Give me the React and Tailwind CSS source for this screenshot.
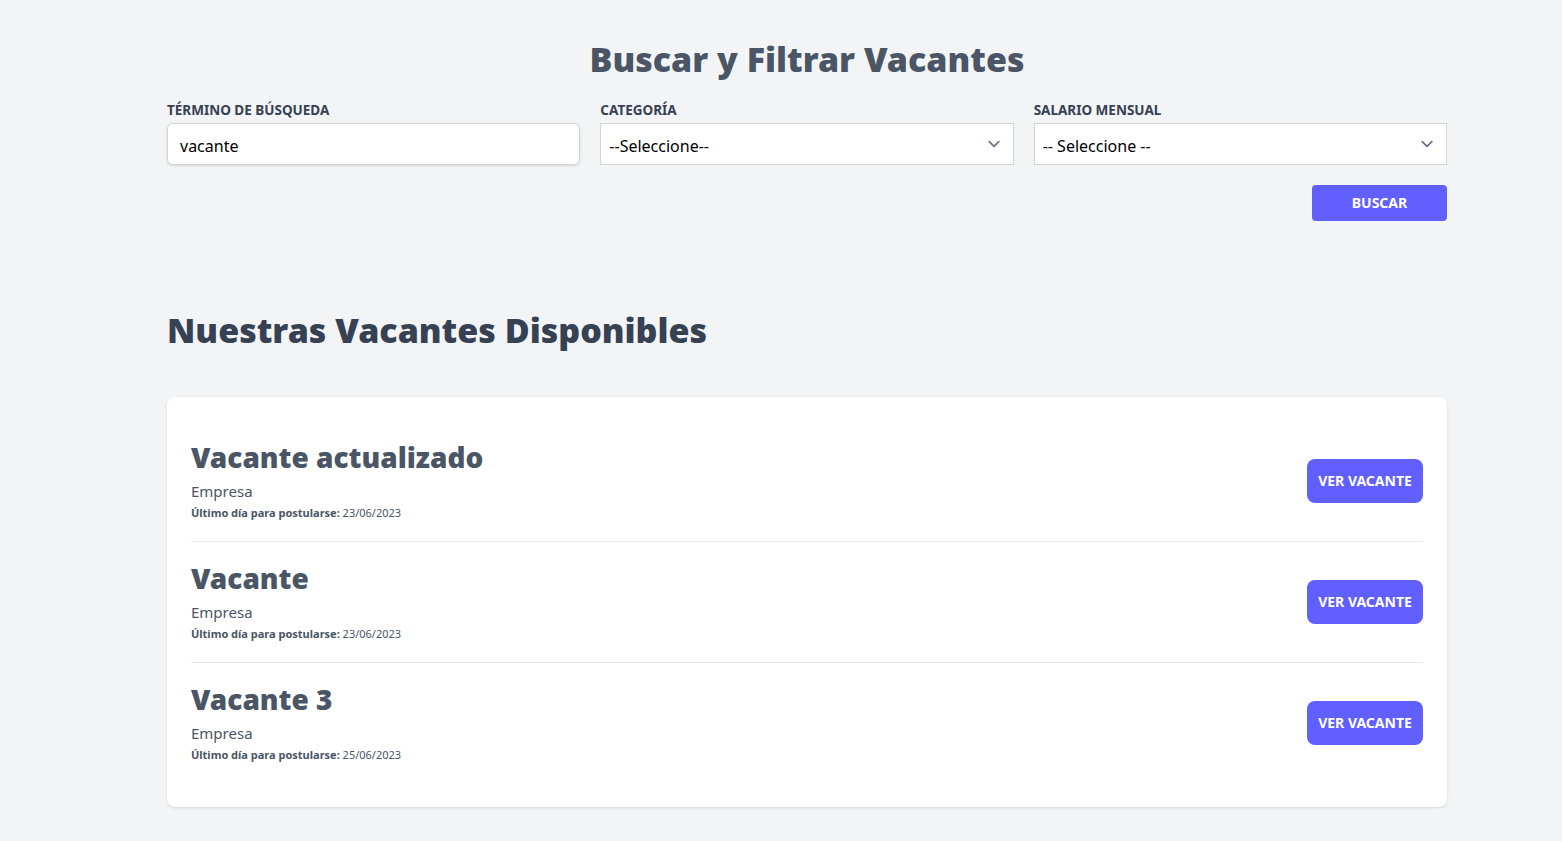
// Vacantes listing page: search filters + available vacancies

import React, { useState } from 'react';

const vacantes = [
  { id: 1, titulo: 'Vacante actualizado', empresa: 'Empresa', ultimoDia: '23/06/2023' },
  { id: 2, titulo: 'Vacante', empresa: 'Empresa', ultimoDia: '23/06/2023' },
  { id: 3, titulo: 'Vacante 3', empresa: 'Empresa', ultimoDia: '25/06/2023' },
];

function Chevron() {
  return (
    <svg className="w-6 h-6 text-gray-500" viewBox="0 0 20 20" fill="none" stroke="currentColor" strokeWidth="1.5">
      <path d="M6 8l4 4 4-4" strokeLinecap="round" strokeLinejoin="round" />
    </svg>
  );
}

export default function App() {
  const [termino, setTermino] = useState('vacante');
  const [categoria, setCategoria] = useState('');
  const [salario, setSalario] = useState('');

  return (
    <div className="min-h-screen bg-gray-100 font-['Noto_Sans',sans-serif]">
      <div className="w-[1280px] ml-[167px] pt-[39px] pb-8">
        {/* Buscador */}
        <h2 className="text-[34px] font-black text-gray-600 text-center leading-10">
          Buscar y Filtrar Vacantes
        </h2>

        <form className="mt-[21px]" onSubmit={(e) => e.preventDefault()}>
          <div className="grid grid-cols-3 gap-5">
            <div>
              <label htmlFor="termino" className="block text-[13.5px] font-bold uppercase text-gray-700 leading-5">
                Término de Búsqueda
              </label>
              <input
                id="termino"
                type="text"
                value={termino}
                onChange={(e) => setTermino(e.target.value)}
                className="mt-[3px] block w-full h-[42px] px-3 pt-1 bg-white border border-gray-300 rounded-md shadow-sm text-base text-black outline-none"
              />
            </div>

            <div>
              <label htmlFor="categoria" className="block text-[13.5px] font-bold uppercase text-gray-700 leading-5">
                Categoría
              </label>
              <div className="relative mt-[3px]">
                <select
                  id="categoria"
                  value={categoria}
                  onChange={(e) => setCategoria(e.target.value)}
                  className="appearance-none block w-full h-[42px] pl-2 pr-10 pt-1 bg-white border border-gray-300 text-base text-black outline-none"
                >
                  <option value="">--Seleccione--</option>
                  <option value="1">Desarrollo Web</option>
                  <option value="2">Diseño</option>
                </select>
                <span className="pointer-events-none absolute right-2 top-1/2 -translate-y-1/2">
                  <Chevron />
                </span>
              </div>
            </div>

            <div>
              <label htmlFor="salario" className="block text-[13.5px] font-bold uppercase text-gray-700 leading-5">
                Salario Mensual
              </label>
              <div className="relative mt-[3px]">
                <select
                  id="salario"
                  value={salario}
                  onChange={(e) => setSalario(e.target.value)}
                  className="appearance-none block w-full h-[42px] pl-2 pr-10 pt-1 bg-white border border-gray-300 text-base text-black outline-none"
                >
                  <option value="">-- Seleccione --</option>
                  <option value="1">$0 - $499</option>
                  <option value="2">$500 - $999</option>
                </select>
                <span className="pointer-events-none absolute right-2 top-1/2 -translate-y-1/2">
                  <Chevron />
                </span>
              </div>
            </div>
          </div>

          <div className="flex justify-end mt-5">
            <button
              type="submit"
              className="w-[135px] h-9 rounded bg-indigo-500 text-white text-sm font-bold uppercase"
            >
              Buscar
            </button>
          </div>
        </form>

        {/* Listado */}
        <h3 className="mt-[89px] text-[34px] font-black text-gray-700 leading-10">
          Nuestras Vacantes Disponibles
        </h3>

        <div className="mt-[47px] bg-white rounded-lg shadow-sm p-6 divide-y divide-gray-200">
          {vacantes.map((vacante) => (
            <div key={vacante.id} className="box-content h-[120px] flex items-center justify-between">
              <div>
                <h4 className="text-[28px] font-black text-gray-600 leading-9">{vacante.titulo}</h4>
                <p className="mt-1 text-[15px] text-gray-600 leading-6">{vacante.empresa}</p>
                <p className="text-[11px] text-gray-600 leading-5">
                  <span className="font-bold">Último día para postularse: </span>
                  {vacante.ultimoDia}
                </p>
              </div>
              <a
                href="#"
                className="h-11 w-[116px] flex items-center justify-center rounded-lg bg-indigo-500 text-white text-sm font-bold uppercase"
              >
                Ver Vacante
              </a>
            </div>
          ))}
        </div>
      </div>
    </div>
  );
}
